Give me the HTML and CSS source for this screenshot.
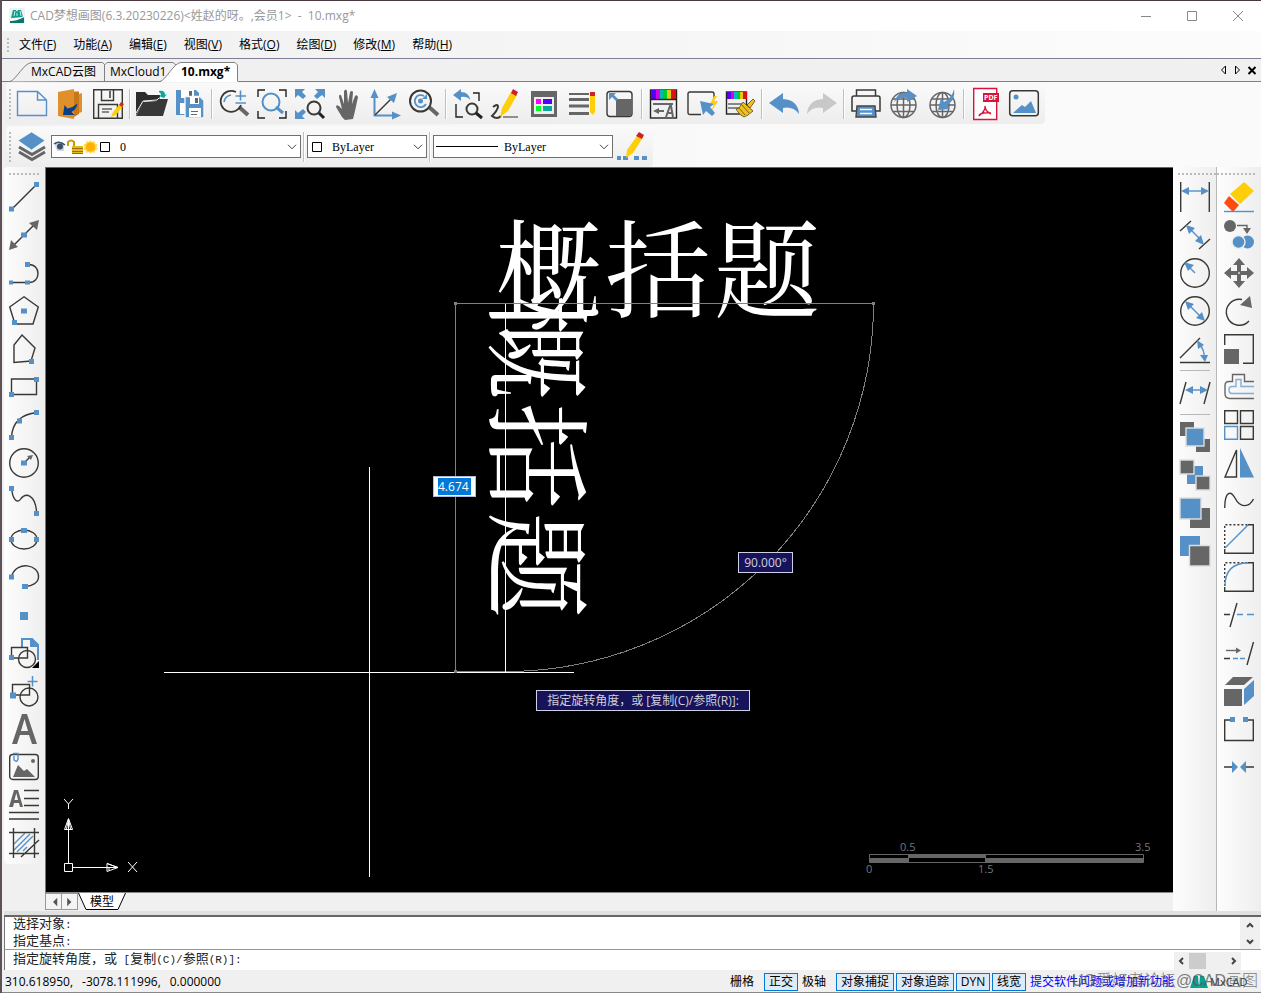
FILE: index.html
```html
<!DOCTYPE html>
<html lang="zh-CN">
<head>
<meta charset="utf-8">
<title>CAD梦想画图</title>
<link rel="stylesheet" href="styles.css">
</head>
<body>
<header class="titlebar">
  <svg class="applogo" viewBox="0 0 16 16"><rect width="16" height="16" rx="2" fill="#eef1f0"/><path d="M2 10L4 2h3l1 2 1-2h3l2 7z" fill="#0b9c8e"/><path d="M6 3L5 8M11 3l1 5M8 5v3" stroke="#cfeeea" fill="none"/><path d="M1 13c5 0 8-1 14-4v6H1z" fill="#08786f"/><path d="M1 12c5-.2 9-1 14-3.500" stroke="#fff" fill="none"/></svg>
  <h1 class="title">CAD梦想画图(6.3.20230226)&lt;姓赵的呀。,会员1&gt;&nbsp; -&nbsp; 10.mxg*</h1>
  <div class="winbtns">
    <button aria-label="最小化"><svg viewBox="0 0 12 12"><path d="M1 6.500h10"/></svg></button>
    <button aria-label="最大化"><svg viewBox="0 0 12 12"><path d="M1.500 1.500h9v9h-9z"/></svg></button>
    <button aria-label="关闭"><svg viewBox="0 0 12 12"><path d="M1 1l10 10M11 1L1 11"/></svg></button>
  </div>
</header>
<nav class="menubar">
  <i class="grip"></i>
  <button>文件(<u>F</u>)</button><button>功能(<u>A</u>)</button><button>编辑(<u>E</u>)</button><button>视图(<u>V</u>)</button><button>格式(<u>O</u>)</button><button>绘图(<u>D</u>)</button><button>修改(<u>M</u>)</button><button>帮助(<u>H</u>)</button>
</nav>
<nav class="tabs">
  <svg class="tabshape" width="240" height="23"><path d="M10 22.500C16 21 24 3.500 32 3.500H102.500L104.500 5.500V22" fill="#f0f0f0" stroke="#808080"/><path d="M104.500 6L107 3.500H173L176 6" fill="none" stroke="#808080"/><path d="M160 23C166 21 174 3.500 181 3.500H235L237.500 6V23z" fill="#fff"/><path d="M160 22.500C166 21 174 3.500 181 3.500H235L237.500 6V22" fill="none" stroke="#808080"/></svg>
  <button class="tab t1">MxCAD云图</button><button class="tab t2">MxCloud1</button><button class="tab t3">10.mxg*</button>
  <span class="tabctl">
    <button aria-label="上一个"><svg viewBox="0 0 8 10"><path d="M5.500 1v8L1.500 5z"/></svg></button>
    <button aria-label="下一个"><svg viewBox="0 0 8 10"><path d="M1.500 1v8L5.500 5z"/></svg></button>
    <button aria-label="关闭标签"><svg viewBox="0 0 8 10"><path d="M.5 2l7 7M7.500 2l-7 7" stroke-width="2"/></svg></button>
  </span>
</nav>
<section class="bars">
<div class="bar">
  <i class="grip tall"></i>
  <button aria-label="新建"><svg viewBox="0 0 30 30"><path class="bs" d="M.5 2.500H20.500L29.500 11V26.500H.5zM20.500 2.500V11H29.500"/></svg></button>
  <button aria-label="退出"><svg viewBox="0 0 30 30"><path d="M3 3L19 0V30L3 27z" fill="#e0902a"/><path d="M19 2.500h5V25l-5 3z" fill="#c87818"/><path d="M24 5l3-1V23l-3 1z" fill="#e0902a"/><path d="M8 26L9.500 16l3 3.500q5.500-1 10-5-1 6-6 8.500l3 3z" fill="#0a3f8a"/></svg></button>
  <button aria-label="保存"><svg viewBox="0 0 30 30"><path class="k" d="M.7.7h28.600v28.600H.7zM8.500 1v10.500h12V1M5.500 29V15.500h19V29"/><path d="M17 2v7" stroke="#666" stroke-width="2"/><path d="M9 20h10M9 23h7" stroke="#666" stroke-width="1.500"/><path d="M18 28l2-5 7-8 3 2-7 9z" fill="#ffce0a"/><path d="M26 16l2-3 3 2-2 3z" fill="#d22"/></svg></button>
  <i class="vsep"></i>
  <button aria-label="打开"><svg viewBox="0 0 30 30"><path d="M-1 3h9l3 3h12v6H7L-1 26z" fill="#2d2d2d"/><path d="M6 13l14-1 3-2h8L26 27H-1z" fill="#383838"/><path d="M-1 24L6 12l14-1 2-2h6" stroke="#f4f4f4" stroke-width="1" fill="none"/><path d="M22 2q6-1 6 4l2-1-3 4-5-2 2-1q0-2-2-3z" fill="#0aa896"/></svg></button>
  <button aria-label="全部保存"><svg viewBox="0 0 30 30"><path class="b" d="M1 1h20l3 3v22H1z"/><path d="M6 1h13v8H6zM5 14h6v11H5z" fill="#fff"/><path d="M14 2h3v6h-3z" class="g"/><path d="M10 7.500h15l4 4V29H10z" fill="#5792c6" stroke="#f5f5f5"/><path d="M15 8h9v7h-9zM14 19h12v9H14z" fill="#fff"/><path class="g" d="M20 9h3v5h-3zM16 22h7v1h-7zM16 25h6v1h-6z"/></svg></button>
  <i class="vsep"></i>
  <button aria-label="缩放"><svg viewBox="0 0 30 30"><path class="gs" stroke-width="4" d="M20 18l9 8"/><path class="k" stroke-width="1.700" d="M17 3A10.500 10.500 0 1 0 22 16"/><path class="bs" stroke-width="1.600" d="M12 6q-6 1-7 7M16.500 7H27M21.500 1.500v10M16.500 14H27"/></svg></button>
  <button aria-label="窗口缩放"><svg viewBox="0 0 30 30"><path class="ks" d="M1 8V1H8M22 1h7V8M29 22v7h-7M8 29H1V22"/><circle class="bs" cx="14" cy="13" r="8.500" stroke-width="2"/><path class="bs" stroke-width="3" d="M19 18l7 6"/></svg></button>
  <button aria-label="范围缩放"><svg viewBox="0 0 30 30"><path class="b" d="M0 0h10L7 3l4 4-3 3-5-4-3 3zM30 0H20l3 3-4 4 3 3 5-4 3 3zM0 30h10l-3-3 4-4-3-3-5 4-3-3z"/><circle class="k" cx="19" cy="19" r="6.500" stroke-width="2"/><path class="ks" stroke-width="3" d="M24 24l5 5"/></svg></button>
  <button aria-label="平移"><svg viewBox="0 0 30 30"><path class="g" d="M9 28L3 18Q3 15 6 17l3 3L6 8q0-3 2-2l3 9L11 2q2-3 3 0l1 12 2-11q2-2 3 0l-1 12 3-8q2-2 3 1l-3 14-2 8-8 1z"/></svg></button>
  <button aria-label="坐标系"><svg viewBox="0 0 30 30"><path class="bs" stroke-width="2" d="M3.500 8V26.500H24"/><path class="b" d="M3.500 0L7.500 9h-8zM30 26.500l-9-4v8z"/><path class="k" d="M4 26L21 9"/><path class="b" d="M26 4l-3 10-7-6z"/></svg></button>
  <button aria-label="实时缩放"><svg viewBox="0 0 30 30"><path class="gs" stroke-width="4" d="M20 18l9 8"/><circle class="k" cx="11.500" cy="12" r="10.500" stroke-width="2"/><path class="bs" stroke-width="1.800" d="M15 7A6 6 0 1 0 17 15"/><circle class="b" cx="11.500" cy="12" r="2.500"/><path class="b" d="M18 5v5h-5z"/></svg></button>
  <i class="vsep"></i>
  <button aria-label="上一视图"><svg viewBox="0 0 30 30"><path class="b" d="M0 6l8-6v3q8 0 9 8-3-4-9-3v4z"/><path class="ks" d="M20 4h6v8M3 15v13h7"/><circle class="k" cx="19" cy="20" r="5.500" stroke-width="2"/><path class="ks" stroke-width="3" d="M23 24l6 5"/></svg></button>
  <button aria-label="草图"><svg viewBox="0 0 30 30"><path class="k" stroke-width="2" d="M2 18q5-4 5 0-1 4-6 9 5 4 9 0"/><path class="gs" d="M12 28h15"/><path d="M9 28l2-9L20 3l6 3-9 16z" fill="#ffce0a"/><path d="M20 4l2-4 5 3-2 4z" fill="#d02028"/></svg></button>
  <button aria-label="图层面板"><svg viewBox="0 0 30 30"><path class="g" d="M2 2h26v26H2z"/><path fill="#eee" d="M5 8h20v17H5z"/><path fill="#f0f" d="M7 10h5v5H7z"/><path fill="#50f" d="M14 10h9v5h-9z"/><path fill="#0f2" d="M7 17h5v5H7z"/><path fill="#0aa89c" d="M14 17h9v5h-9z"/></svg></button>
  <button aria-label="列表"><svg viewBox="0 0 30 30"><path class="gs" stroke-width="2" d="M2 5h20"/><path class="gs" stroke-width="3" d="M2 10.500h20M2 17h20M2 24.500h20"/><path d="M23 6h5v17l-2.500 3-2.500-3z" fill="#ffce0a"/><path d="M23 3h5v4h-5z" fill="#d02028"/></svg></button>
  <button aria-label="视口"><svg viewBox="0 0 30 30"><rect class="k" x="2" y="2.500" width="25" height="25" rx="3"/><path class="g" d="M11 10h16v14q0 3-3 3H11z"/><path class="b" d="M4 4h7L9 6l4 4-2 2-4-4-3 3z"/></svg></button>
  <i class="vsep"></i>
  <button aria-label="文字样式"><svg viewBox="0 0 30 30"><rect x="1.500" y="1" width="26" height="28" fill="#f0f0f0" stroke="#222"/><path fill="#50f" d="M2 1h5v9H2z"/><path fill="#d0d" d="M7 1h4v9H7z"/><path fill="#0bb" d="M11 1h3v9h-3z"/><path fill="#0c2" d="M14 1h4v9h-4z"/><path fill="#dc1" d="M18 1h4v9h-4z"/><path fill="#d11" d="M22 1h5v9h-5z"/><path d="M2 10.500h25" stroke="#222"/><path class="gs" stroke-width="2" d="M4 15h20M9 22h6M17 28l4-11h1l2 11M19 24h5"/><path class="g" d="M4 22l6-3v6z"/></svg></button>
  <button aria-label="快速选择"><svg viewBox="0 0 30 30"><path class="k" d="M14 25.500H3q-2 0-2-2V5q0-2 2-2H25q2 0 2 2V9"/><path d="M27 7l-4 8h4l-3 8 7-11h-4l3-5z" fill="#ffce0a"/><path class="b" d="M13 12l14 3-4 3 5 6-3 3-6-5-3 4z"/></svg></button>
  <button aria-label="特性匹配"><svg viewBox="0 0 30 30"><rect x="1.500" y="3" width="20" height="22" fill="#f0f0f0" stroke="#222"/><path fill="#50f" d="M2 3h4v7H2z"/><path fill="#d0d" d="M6 3h3v7H6z"/><path fill="#0bb" d="M9 3h3v7H9z"/><path fill="#0c2" d="M12 3h3v7h-3z"/><path fill="#dc1" d="M15 3h3v7h-3z"/><path fill="#d11" d="M18 3h4v7h-4z"/><path class="gs" stroke-width="1.600" d="M3 15h14M3 19h11"/><path d="M11 20l3-1 4-6 10 9-5 4-4 2q-5-2-8-8zM22 16l6-6 2 2-5 7z" fill="#f0c020" stroke="#5a4a10" stroke-width=".8"/><path d="M14 19l6 7M17 16l7 8" stroke="#5a4a10" stroke-width=".8"/></svg></button>
  <i class="vsep"></i>
  <button aria-label="撤销"><svg viewBox="0 0 30 30"><path class="b" d="M0 14L14 4V10q15 1 16 15-6-8-16-6v5z"/></svg></button>
  <button aria-label="重做"><svg viewBox="0 0 30 30"><path fill="#c8c8c8" d="M30 14L16 4V10Q1 11 0 25q6-8 16-6v5z"/></svg></button>
  <i class="vsep"></i>
  <button aria-label="打印"><svg viewBox="0 0 30 30"><path class="k" stroke-width="1.500" d="M5.500 6.500V1h19V6.500M5 22H1V9q0-2 2-2H27q2 0 2 2V22H25"/><path d="M6 17h18l1 11H5z" class="b" stroke="#444"/><path d="M9 20.500h12M9 24.500h12" stroke="#fff"/></svg></button>
  <button aria-label="发布"><svg viewBox="0 0 30 30"><g class="gs" stroke-width="1.500"><circle cx="14.500" cy="16" r="12.500"/><ellipse cx="14.500" cy="16" rx="6.500" ry="12.500"/><path d="M14.500 4v25M2 16h25M4 10h21M4 22.500h21"/></g><path class="b" d="M5 13Q9 2 18 4V0l10 7-10 6V9q-8-1-13 4z"/></svg></button>
  <button aria-label="下载"><svg viewBox="0 0 30 30"><g class="gs" stroke-width="1.500"><circle cx="15.500" cy="16" r="12.500"/><ellipse cx="15.500" cy="16" rx="6.500" ry="12.500"/><path d="M15.500 4v25M3 16h25M5 10h21M5 22.500h21"/></g><path class="b" d="M27 0q2 11-7 16l3 4-12 1 3-12 3 4q8-4 10-13z"/></svg></button>
  <i class="vsep"></i>
  <button aria-label="PDF"><svg viewBox="0 0 30 30"><path d="M2.700-.5h23v31h-23z" fill="#fff" stroke="#d8143c"/><path fill="#d8143c" d="M12 4h16v9H12z"/><text x="13" y="11" fill="#fff" class="pdf">PDF</text><path d="M14 17q1 4-6 10M14 17q0 5 6 8M8 27q1-4 12-3" stroke="#d8143c" fill="none"/></svg></button>
  <button aria-label="图像"><svg viewBox="0 0 30 30"><rect class="k" x=".7" y="1.700" width="28.600" height="25" rx="3" stroke-width="1.500"/><circle class="b" cx="7" cy="8" r="2.500"/><path class="b" d="M4 24l9-8 3 2 6-6 5 12z"/></svg></button>
</div>
<div class="bar second">
  <i class="grip tall"></i>
  <button aria-label="图层"><svg viewBox="0 0 30 30"><path d="M2 20l13 7.500L28 20M2 15l13 7.500L28 15" class="gs" stroke-width="3"/><path class="b" d="M14.500 0L28 8.500 14.500 18 1 8.500z" stroke="#fff" stroke-width=".6"/></svg></button>
  <div class="combo layer"><select aria-label="图层"><option>0</option></select>
    <svg class="deco" width="60" height="18"><path d="M0 5q5-3 10 0v8H3z" fill="#cfd6e2"/><path d="M0 6q5-4 11 1" stroke="#38506c" fill="none" stroke-width="1.600"/><circle cx="6" cy="8.500" r="3" fill="#38506c"/><path d="M14 8V4q3-3 6 0v5" fill="none" stroke="#c89a10" stroke-width="2"/><path d="M18 8h11v8H18z" fill="#e8b820"/><path d="M18 10.500h11M18 13.500h11M18 15.500h11" stroke="#9a7008"/><path d="M36.500 2l1.500 2 2.500-1 .5 2.500 2.500 1-1 2.500 1 2.500-2.500 1-.5 2.500-2.500-1-1.500 2-1.500-2-2.500 1-.5-2.500-2.500-1 1-2.500-1-2.500 2.500-1 .5-2.500 2.500 1z" fill="#ffd84a"/><circle cx="36.500" cy="9" r="4.500" fill="#ffb000"/><path d="M46.500 4.500h9v9h-9z" fill="#fff" stroke="#000"/></svg>
    <svg class="chev" viewBox="0 0 10 6"><path d="M1 .8l4 4 4-4"/></svg></div>
  <i class="vsep"></i>
  <div class="combo color"><select aria-label="颜色"><option>ByLayer</option></select>
    <svg class="deco" width="20" height="18"><path d="M2.500 4.500h9v9h-9z" fill="#fff" stroke="#000"/></svg>
    <svg class="chev" viewBox="0 0 10 6"><path d="M1 .8l4 4 4-4"/></svg></div>
  <i class="vsep"></i>
  <div class="combo ltype"><select aria-label="线型"><option>ByLayer</option></select>
    <svg class="deco" width="66" height="18"><path d="M0 8.500h62" stroke="#000"/></svg>
    <svg class="chev" viewBox="0 0 10 6"><path d="M1 .8l4 4 4-4"/></svg></div>
  <button aria-label="线宽"><svg viewBox="0 0 30 30"><path class="b" d="M0 24h4v4H0zM6 24h5v4H6zM17 24h5v4h-5zM25 24h5v4h-5z"/><path d="M9 26l1-8L20 4l5 3-9 14z" fill="#ffce0a"/><path d="M19 4l3-4 5 3-2 4z" fill="#d02028"/></svg></button>
</div>
</section>
<main class="work">
<aside class="palette left">
  <i class="hgrip"></i>
  <button aria-label="直线"><svg viewBox="0 0 30 30"><path class="k" d="M3 27L27 3"/><path class="b" d="M0 24.500h5v5H0zM25 0h5v5h-5z"/></svg></button>
  <button aria-label="构造线"><svg viewBox="0 0 30 30"><path class="k" d="M4 26L26 4"/><path class="g" d="M30 0l-2 10-8-7zM0 30l2-10 7 7z"/><path class="b" d="M12 12.500h6v5h-6z"/></svg></button>
  <button aria-label="多段线"><svg viewBox="0 0 30 30"><path class="k" d="M2 24.500H20c12 0 12-18 0-18"/><path class="b" d="M0 22.500h4v4H0zM16 22.500h5v4h-5zM16 4h5v5h-5z"/></svg></button>
  <button aria-label="正多边形"><svg viewBox="0 0 30 30"><path class="k" d="M15 .8L29.300 11 24 28H6L.7 11z"/><path class="b" d="M12 12.500h6v5h-6zM3 24h5v5H3z"/></svg></button>
  <button aria-label="多边形"><svg viewBox="0 0 30 30"><path class="k" d="M13 1l13 13-4 13-17 1.500V11z"/><path class="b" d="M20 25h5v5h-5z"/></svg></button>
  <button aria-label="矩形"><svg viewBox="0 0 30 30"><path class="k" d="M2.500 7h25v15.500h-25z"/><path class="b" d="M0 20h5v5H0zM25 5h5v5h-5z"/></svg></button>
  <button aria-label="圆弧"><svg viewBox="0 0 30 30"><path class="k" d="M2.500 27Q4 5 28 2.500"/><path class="b" d="M0 25h5v5H0zM8 8.500h5v5H8zM25 0h5v5h-5z"/></svg></button>
  <button aria-label="圆"><svg viewBox="0 0 30 30"><circle class="k" cx="15" cy="15" r="14.300"/><path class="k" d="M15 15l6-6"/><path class="g" d="M24 7l-2 5-4-4z"/><path class="b" d="M12 12.500h6v5h-6z"/></svg></button>
  <button aria-label="样条曲线"><svg viewBox="0 0 30 30"><path class="k" d="M3 5C4 14 9 18 12 12.500C17 6 26 9 27.500 25"/><path class="b" d="M0 0h5v5H0zM25 25h5v5h-5z"/></svg></button>
  <button aria-label="椭圆"><svg viewBox="0 0 30 30"><ellipse class="k" cx="15" cy="15.500" rx="13" ry="9.500"/><path class="b" d="M12 4h6v5h-6zM0 13h5v5H0zM25 13h5v5h-5z"/></svg></button>
  <button aria-label="椭圆弧"><svg viewBox="0 0 30 30"><path class="k" d="M3 13C8-1 30 2 29.500 15c0 6-7 9-13 9.500"/><path class="b" d="M0 12.500h5v5H0zM13 22h6v5h-6z"/></svg></button>
  <button aria-label="点"><svg viewBox="0 0 30 30"><path class="b" d="M11 12h8v8h-8z"/></svg></button>
  <button aria-label="插入块"><svg viewBox="0 0 30 30"><path class="bs" stroke-width="2" d="M13 9V1h10l6 6v15"/><path class="b" d="M21 0h2l7 7v2h-9z"/><path class="k" d="M2.500 20V9.500H18.500V20z"/><circle class="k" cx="18" cy="21" r="8.500"/><path class="b" d="M0 17h5v5H0z"/><path d="M30 23v7h-7z"/></svg></button>
  <button aria-label="创建块"><svg viewBox="0 0 30 30"><path class="k" d="M3.500 19V8.500H20.500V19z"/><circle class="k" cx="20" cy="21" r="9"/><path class="b" d="M1 16.500h6v6H1z"/><path class="bs" stroke-width="1.500" d="M18.500 5.500h10M23.500 0v10.500"/></svg></button>
  <button aria-label="文字"><svg viewBox="0 0 30 30"><path class="g" fill-rule="evenodd" d="M3 30L13 0h5l10 30h-5l-3-9H11l-3 9zM12 17h7L15.500 5z"/></svg></button>
  <button aria-label="图像"><svg viewBox="0 0 30 30"><rect class="k" x=".7" y="2.500" width="28.600" height="25" rx="3"/><path class="bs" d="M4 1.500h5V7q-1 4-4 1V4"/><circle class="g" cx="24" cy="9" r="2"/><path class="g" d="M4 25l5-12 6 6 3-2 8 8z"/></svg></button>
  <button aria-label="多行文字"><svg viewBox="0 0 30 30"><path class="g" fill-rule="evenodd" d="M0 17L5 0h4l5 17h-3l-1-4H5l-1 4zM5.500 10h3.500L7.300 3z"/><path class="k" d="M15 .5h15M15 8.500h15M15 15.500h15M0 22.500h30M0 29h30"/></svg></button>
  <button aria-label="填充"><svg viewBox="0 0 30 30"><path class="bs" d="M5 16L16 5M5 22L21 6M8 24L24 8M14 23l4-4"/><path class="k" d="M0 4.500h30M0 25.500h30M4.500 0v30M25.500 0v30M12 29L30 12"/></svg></button>
</aside>
<section class="center">
  <div class="canvas">
    <svg class="drawing" width="100%" height="100%">
      <g transform="translate(-46 -168)">
        <text class="cad" x="496 605 714" y="309">概括题</text>
        <text class="cad" x="0 109 218" transform="translate(498 294) rotate(90)">概括题</text>
        <g shape-rendering="crispEdges" fill="none">
          <path d="M505.500 303v369M164 672.500H574M369.500 467V877" stroke="#fff"/>
          <path d="M455.500 672V303.500H873.500M455 671.500h50" stroke="#808080"/>
          <path d="M873.500 303.500A368 368 0 0 1 505.500 671.500" stroke="#808080"/>
        </g>
        <path d="M454 302h3v3h-3zM872 302h3v3h-3zM454 670h3v3h-3z" fill="#808080"/>
        <path d="M64.500 863.500h8v8h-8zM68.500 863V819M73 867.500h45M107 863.500v8l11-4zM107 863.500l11 4M109 867.500v3M64.500 829.500h8l-4-11zM66.500 829l2-10 2 10M64 799l4.500 5 4.500-5M68.500 804v5M128 862l9 10M137 862l-9 10" stroke="#fff" fill="none"/>
        <path d="M869.500 854.500h274v8h-274z" fill="#000" stroke="#666"/><path d="M869 858h39v4h-39zM908 854h78v4h-78zM985 858h159v4h-159z" fill="#666"/><path d="M908.500 854v8M985.500 854v8" stroke="#666"/>
        <g class="scale"><text x="900" y="851">0.5</text><text x="1135" y="851">3.5</text><text x="866" y="873">0</text><text x="978" y="873">1.5</text></g>
      </g>
    </svg>
    <input class="dyn" aria-label="距离" value="4.674">
    <output class="tip angle">90.000°</output>
    <output class="tip prompt">指定旋转角度，或 [复制(C)/参照(R)]:</output>
  </div>
  <div class="modelbar">
    <button class="nav" aria-label="左移"><svg viewBox="0 0 16 16"><path d="M12 4v9L7.500 8.500z" fill="#555"/></svg></button><button class="nav" aria-label="右移"><svg viewBox="0 0 16 16"><path d="M5.500 4v9L10 8.500z" fill="#555"/></svg></button>
    <button class="model"><svg viewBox="0 0 48 17"><path d="M0 0L8 16.500H40L48 0z" fill="#fff"/><path d="M.5 0L8 16.500H40L47.500 0" fill="none" stroke="#000"/></svg><span>模型</span></button>
  </div>
</section>
<aside class="palette dims">
  <i class="hgrip"></i>
  <button aria-label="线性标注"><svg viewBox="0 0 30 30"><path class="k" d="M.7 0v30M29.300 0v30"/><path class="bs" d="M4 9h22"/><path class="b" d="M1 9l8-4v8zM29 9l-8-4v8z"/></svg></button>
  <button aria-label="对齐标注"><svg viewBox="0 0 30 30"><path class="k" d="M0 11L11 1M19 29L30 19"/><path class="bs" d="M9 8l13 13"/><path class="b" d="M6 5l9 3-6 6zM24 25l-9-4 6-6z"/></svg></button>
  <button aria-label="半径标注"><svg viewBox="0 0 30 30"><circle class="k" cx="15" cy="15" r="14.300"/><path class="bs" d="M7 7l8 8"/><path class="b" d="M4 4l10 3-6 6z"/></svg></button>
  <button aria-label="直径标注"><svg viewBox="0 0 30 30"><circle class="k" cx="15" cy="15" r="14.300"/><path class="bs" d="M7 7l16 16"/><path class="b" d="M5 5l9 3-6 6zM25 25l-9-3 6-6z"/></svg></button>
  <button aria-label="角度标注"><svg viewBox="0 0 30 30"><path class="k" d="M0 24L20 4M0 28.500h30"/><path class="bs" d="M19 10q6 6 5 14"/><path class="b" d="M17 6l7 5-6 4zM20 21h8l-3 7z"/></svg></button>
  <i class="hsep"></i>
  <button aria-label="倾斜标注"><svg viewBox="0 0 30 30"><path class="k" d="M0 26L6 4M24 26L30 4"/><path class="bs" d="M7 12h18"/><path class="b" d="M5 12l8-4v8zM28 12l-8-4v8z"/></svg></button>
  <i class="hsep"></i>
  <button aria-label="置前"><svg viewBox="0 0 30 30"><path class="g" d="M0 0h14v14H0zM16 17h14v13H16z"/><path class="b" d="M6 6h18v18H6z" stroke="#ddd"/></svg></button>
  <button aria-label="置后"><svg viewBox="0 0 30 30"><path class="b" d="M7 6h16v18H7z"/><path class="g" d="M0 0h14v14H0zM16 16h14v14H16z" stroke="#ddd"/></svg></button>
  <button aria-label="前置对象"><svg viewBox="0 0 30 30"><path class="g" d="M10 10h20v20H10z"/><path class="b" d="M0 0h21v21H0z" stroke="#ddd"/></svg></button>
  <button aria-label="后置对象"><svg viewBox="0 0 30 30"><path class="b" d="M0 0h20v20H0z"/><path class="g" d="M9.500 9.500H30V30H9.500z" stroke="#ddd"/></svg></button>
</aside>
<aside class="palette edit">
  <i class="hgrip"></i>
  <button aria-label="删除"><svg viewBox="0 0 30 30"><path d="M20 0l10 9-14 13L6 12z" fill="#ffce0a"/><path d="M5 14l10 9-5 6H8l-8-8z" fill="#ff4a10"/><path class="bs" d="M0 29.500h30"/></svg></button>
  <button aria-label="复制"><svg viewBox="0 0 30 30"><circle class="g" cx="6" cy="6" r="6"/><path class="gs" d="M13 5.500h10v4"/><path class="g" d="M19 8h8l-4 6z"/><circle class="b" cx="23.500" cy="22" r="6.500"/><circle class="b" cx="14.500" cy="22" r="6.500" stroke="#eee"/></svg></button>
  <button aria-label="移动"><svg viewBox="0 0 30 30"><path class="g" d="M15 0l6 7h-4v6h6V9l7 6-7 6v-4h-6v6h4l-6 7-6-7h4v-6H7v4l-7-6 7-6v4h6V7H9z"/><circle cx="15" cy="15" r="1" fill="#ddd"/></svg></button>
  <button aria-label="旋转"><svg viewBox="0 0 30 30"><path class="k" d="M18 3.500A13 13 0 1 0 25 25"/><path class="g" d="M16 9L26 0l2 12z"/></svg></button>
  <button aria-label="缩放对象"><svg viewBox="0 0 30 30"><path class="k" d="M.7 11V.7H29.300V29.300H19"/><path class="g" d="M0 15h15v15H0z"/></svg></button>
  <button aria-label="偏移"><svg viewBox="0 0 30 30"><path class="gs" d="M30 9.500H20.500V2.500H8.500v7H5q-4 0-4 4v8q0 5 5 5H30"/><path class="bs" d="M30 14.500H17V7.500h-5v7H8q-3 0-3 3 0 4 3 4H30" opacity=".7"/></svg></button>
  <button aria-label="阵列"><svg viewBox="0 0 30 30"><path class="k" d="M.7.7H13.500V13.500H.7zM16.500.7H29.300V13.500H16.500zM16.500 16.500H29.300V29.300H16.500z"/><path class="bs" d="M.7 16.500H13.500V29.300H.7z"/></svg></button>
  <button aria-label="镜像"><svg viewBox="0 0 30 30"><path class="k" d="M1 29L12.500 2V29z"/><path class="b" d="M16 0l14 29.500H16z"/></svg></button>
  <button aria-label="曲线"><svg viewBox="0 0 30 30"><path class="k" d="M.7 22C1 4 7 5 11 12C16 22 25 22 29.500 13"/></svg></button>
  <button aria-label="倒角"><svg viewBox="0 0 30 30"><path class="k" d="M.7 25V29.300H29.300V.7H24"/><path class="k" stroke-dasharray="2 2" d="M.7 24V.7H24"/><path class="bs" d="M1 24L24 1"/></svg></button>
  <button aria-label="圆角"><svg viewBox="0 0 30 30"><path class="k" d="M.7 25V29.300H29.300V.7H24"/><path class="k" stroke-dasharray="2 2" d="M.7 24V.7H24"/><path class="bs" d="M1 24Q1 1 24 1"/></svg></button>
  <button aria-label="修剪"><svg viewBox="0 0 30 30"><path class="k" d="M6 27L13 3M0 14.500h6"/><path class="bs" d="M13 14.500h6M23 14.500h7"/></svg></button>
  <button aria-label="延伸"><svg viewBox="0 0 30 30"><path class="k" d="M23 27L29.500 4M0 20.500h6"/><path class="gs" d="M2 12.500h11"/><path class="g" d="M17 12.500l-5-3v6z"/><path class="bs" d="M9 20.500h5M16 20.500h5"/></svg></button>
  <button aria-label="三维"><svg viewBox="0 0 30 30"><path class="g" d="M0 13h18v17H0zM9 1h20L20 9H1z"/><path class="b" d="M20 13L30 4v16l-10 9z"/></svg></button>
  <button aria-label="打断"><svg viewBox="0 0 30 30"><path class="k" d="M6 6H.7V26.500H29.300V6H24"/><path class="b" d="M6 3h5v5H6zM19 3h5v5h-5z"/></svg></button>
  <button aria-label="合并"><svg viewBox="0 0 30 30"><path class="k" d="M0 15h9M21 15h9"/><path class="b" d="M8 9l6 6-6 6zM22 9l-6 6 6 6z"/></svg></button>
</aside>
</main>
<section class="command">
  <div class="history"><div class="lines"><p>选择对象<span>:</span></p><p>指定基点<span>:</span></p></div>
    <div class="vscroll"><svg viewBox="0 0 8 5"><path d="M1 4l3-3 3 3"/></svg><svg viewBox="0 0 8 5"><path d="M1 1l3 3 3-3"/></svg></div></div>
  <div class="entry"><p>指定旋转角度，或<span> [</span>复制<span>(C)/</span>参照<span>(R)]:</span></p>
    <div class="hscroll"><svg viewBox="0 0 5 8"><path d="M4 1L1 4l3 3"/></svg><i></i><svg viewBox="0 0 5 8"><path d="M1 1l3 3-3 3"/></svg></div></div>
</section>
<footer class="status">
  <span class="coords"><span>310.618950,</span><span>-3078.111996,</span><span>0.000000</span></span>
  <button>栅格</button><button class="on">正交</button><button>极轴</button><button class="on wide">对象捕捉</button><button class="on wide">对象追踪</button><button class="on">DYN</button><button class="on">线宽</button>
  <a href="#feedback">提交软件问题或增加新功能</a>
  <svg class="mx" viewBox="0 0 18 14"><path d="M0 13L4 1h4l1 12zM9 13L10 1h4l4 12z" fill="#0aa090"/></svg><b>MxCAD</b>
  <span class="mark">UG爱好者论坛@CAD画图</span>
</footer>
</body>
</html>
```
FILE: styles.css
```css
* { box-sizing: border-box; }
body {
  margin: 0;
  min-height: 100vh;
  display: flex;
  flex-direction: column;
  background: #f0f0f0;
  border-left: 2px solid #5c5258;
  font: 12px/16px "Open Sans", "Noto Sans CJK SC", sans-serif;
  color: #000;
  overflow: hidden;
}
button {
  border: 0;
  padding: 0;
  background: none;
  font: inherit;
  color: inherit;
  white-space: nowrap;
}
svg { display: block; overflow: visible; }
p { margin: 0; }

.k { fill: none; stroke: #3a3833; }
.ks { fill: none; stroke: #222; }
.b { fill: #5590c6; }
.bs { fill: none; stroke: #5590c6; }
.g { fill: #666; }
.gs { fill: none; stroke: #666; }
.pdf { font: bold 7px "Open Sans", sans-serif; }

.titlebar {
  height: 31px;
  display: flex;
  align-items: center;
  border-top: 1px solid #4a3a40;
  background: #fff;
  padding-left: 7px;
}
.applogo { width: 16px; height: 16px; }
.title { margin: 0 0 0 5px; font-size: 12px; font-weight: 400; color: #999; flex: 1; }
.winbtns { display: flex; }
.winbtns button { width: 46px; height: 30px; display: grid; place-items: center; }
.winbtns svg { width: 12px; height: 12px; fill: none; stroke: #888; }

.menubar {
  height: 28px;
  display: flex;
  align-items: center;
  gap: 17px;
  padding-left: 5px;
  background: linear-gradient(90deg, #f0f0f0, #fcfcfc);
  border-bottom: 1px solid #7f7f96;
}
.menubar .grip { margin-right: -7px; }
.grip {
  width: 2px;
  height: 14px;
  background: repeating-linear-gradient(#bbb 0 2px, transparent 2px 4px);
}
.grip.tall { height: 30px; margin: 0 2px 0 3px; }

.tabs {
  position: relative;
  height: 23px;
  display: flex;
  align-items: center;
  border-bottom: 1px solid #808080;
}
.tabshape { position: absolute; left: -2px; top: 0; }
.tab { position: relative; text-align: left; line-height: 16px; margin-top: 4px; }
.t1 { width: 79px; margin-left: 29px; }
.t2 { width: 71px; }
.t3 { font-weight: 700; }
.tabctl { display: flex; gap: 6px; margin-left: auto; padding: 0 5px 1px 0; }
.tabctl svg { width: 8px; height: 10px; fill: none; stroke: #000; }

.bars { background: linear-gradient(90deg, #f0f0f0, #fafafa 60%); padding: 1px 0 0 4px; height: 85px; }
.bar {
  width: max-content;
  display: flex;
  align-items: center;
  height: 41px;
  padding-right: 2px;
  border-radius: 4px;
  background: linear-gradient(#fafafa, #ededed);
}
.second { margin-top: 2px; }
.bar button { width: 38px; height: 38px; padding: 4px; }
.bar button svg, .palette button svg { width: 30px; height: 30px; stroke-width: 1.4; }
.vsep { width: 2px; height: 30px; margin: 0 2px; background: #c0c0c0; border-right: 1px solid #fff; }
.combo { position: relative; height: 23px; }
.combo select {
  appearance: none;
  width: 100%;
  height: 23px;
  margin: 0;
  border: 1px solid #707070;
  border-radius: 0;
  background: #fff;
  font: 12px/16px "Liberation Serif", serif;
  color: #000;
}
.layer { width: 250px; }
.color { width: 120px; }
.ltype { width: 180px; }
.layer select { padding-left: 68px; }
.color select { padding-left: 24px; }
.ltype select { padding-left: 70px; }
.deco { position: absolute; left: 3px; top: 3px; pointer-events: none; }
.chev { position: absolute; right: 4px; top: 9px; width: 10px; height: 6px; fill: none; stroke: #444; pointer-events: none; }

.work { flex: 1; display: flex; min-height: 0; }
.palette { display: flex; flex-direction: column; align-items: center; background: linear-gradient(90deg, #fdfdfd, #eee); padding-top: 6px; flex: none; }
.palette button { width: 38px; height: 38px; padding: 4px; flex: none; }
.left { width: 40px; margin: 0 1px 0 2px; align-self: flex-start; padding-bottom: 2px; border-radius: 4px; }
.hgrip { width: 30px; height: 2px; margin-bottom: 3px; background: repeating-linear-gradient(90deg, #bbb 0 2px, transparent 2px 4px); flex: none; }
.dims { width: 44px; border-right: 1px solid #b8b8b8; }
.edit { width: 44px; }
.dims .hgrip { width: 38px; margin-left: 5px; }
.edit .hgrip { width: 38px; margin-right: 6px; }
.hsep { width: 30px; height: 1px; margin: 2px 0 3px; background: #b8b8b8; flex: none; }

.center { flex: 1; min-width: 0; display: flex; flex-direction: column; }
.canvas { position: relative; flex: 1; background: #000; border-left: 1px solid #777; border-top: 1px solid #666; border-bottom: 1px solid #888; overflow: hidden; }
.drawing { position: absolute; left: 0; top: 0; }
.cad { font: 400 106px "Noto Serif CJK SC", "Noto Sans CJK SC", serif; fill: #fff; }
.scale { font: 11px "Open Sans", sans-serif; fill: #777; }
.dyn {
  position: absolute;
  left: 387px;
  top: 308px;
  width: 43px;
  height: 21px;
  border: 1px solid #b8b8d8;
  padding: 1px 4px;
  font: 12px/16px "Open Sans", sans-serif;
  color: #fff;
  background: linear-gradient(#0078d7, #0078d7) content-box, #fff;
}
.tip { position: absolute; height: 21px; border: 1px solid #d0d0e4; background: #17135a; color: #d0d0dc; line-height: 19px; white-space: nowrap; text-align: center; }
.angle { left: 692px; top: 384px; width: 55px; }
.prompt { left: 490px; top: 522px; width: 214px; }

.modelbar { height: 18px; display: flex; flex: none; }
.nav { width: 17px; height: 17px; border: 1px solid #999; background: #f4f4f4; }
.nav + .nav { border-left: 0; width: 16px; }
.model { position: relative; width: 48px; height: 17px; }
.model svg { position: absolute; left: 0; top: 0; width: 48px; height: 17px; }
.model span { position: relative; }

.command { margin: 0 0 0 2px; border-top: 4px solid #e0e0e0; font: 13px/17px "Noto Sans CJK SC", sans-serif; color: #222; }
.command span { font: 11px/1 "Liberation Mono", monospace; white-space: pre; }
.history { display: flex; height: 35px; border-top: 2px solid #666; border-bottom: 1px solid #999; border-left: 1px solid #777; background: #fff; overflow: hidden; }
.lines { flex: 1; padding-left: 8px; margin-top: -3px; }
.lines p { height: 17px; }
.vscroll { width: 20px; margin-right: 1px; background: #f0f0f0; display: flex; flex-direction: column; justify-content: space-around; align-items: center; }
.vscroll svg { width: 8px; height: 5px; fill: none; stroke: #444; stroke-width: 2; }
.entry { display: flex; height: 20px; background: #fff; border-left: 1px solid #777; }
.entry p { flex: 1; padding-left: 8px; line-height: 15px; }
.hscroll { width: 67px; margin: 2px 20px 0 0; background: #f0f0f0; display: flex; align-items: center; padding: 0 5px; }
.hscroll svg { width: 5px; height: 8px; fill: none; stroke: #444; stroke-width: 2; }
.hscroll i { width: 17px; height: 16px; margin: 0 auto 0 5px; background: #ccc; }

.status { position: relative; height: 23px; display: flex; align-items: center; padding: 2px 0 0 3px; border-bottom: 1px solid #888; }
.coords { flex: 1; display: flex; gap: 9px; }
.status button { width: 34px; height: 18px; line-height: 16px; margin-right: 2px; text-align: left; padding: 0 2px; }
.status .on { border: 1px solid #0078d7; background: #deebf7; text-align: center; padding: 0; }
.status .wide { width: 58px; }
.status a { margin-left: 2px; width: 145px; color: #00f; text-decoration: none; white-space: nowrap; overflow: hidden; }
.mx { width: 18px; height: 14px; margin: 0 2px 0 15px; }
.status b { width: 51px; font-size: 11px; font-weight: 400; color: #333; }
.mark { position: absolute; right: 3px; top: 1px; font: 300 16px/20px "Liberation Sans", "Noto Sans CJK SC", sans-serif; color: #555; opacity: .75; }
```
